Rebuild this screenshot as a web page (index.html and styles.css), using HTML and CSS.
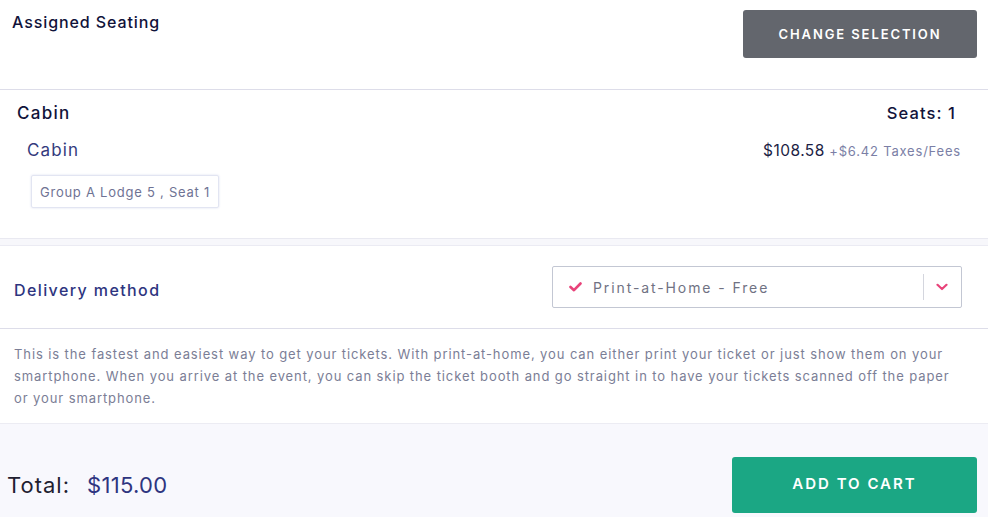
FILE: index.html
```html
<!DOCTYPE html>
<html>
<head>
<meta charset="utf-8">
<link rel="stylesheet" href="styles.css">
</head>
<body>
<div class="page">
  <section class="head">
    <h1 class="title">Assigned Seating</h1>
    <button class="btn-change">CHANGE SELECTION</button>
  </section>
  <section class="seats">
    <div class="row">
      <div class="cat">Cabin</div>
      <div class="count">Seats: 1</div>
    </div>
    <div class="row sub">
      <div class="subname">Cabin</div>
      <div class="price"><span class="amt">$108.58</span> <span class="fees">+$6.42 Taxes/Fees</span></div>
    </div>
    <div class="seat-tag">Group A Lodge 5 , Seat 1</div>
  </section>
  <div class="gap"></div>
  <section class="delivery">
    <div class="dlabel">Delivery method</div>
    <div class="select">
      <svg class="check" width="13" height="10" viewBox="0 0 13 10"><path d="M1.5 5 L5 8.2 L11.5 1.5" fill="none" stroke="#e8437a" stroke-width="2.6" stroke-linecap="round" stroke-linejoin="round"/></svg>
      <span class="sel-text">Print-at-Home - Free</span>
      <span class="divider"></span>
      <svg class="chev" width="12" height="8" viewBox="0 0 12 8"><path d="M1.5 1.8 L6 6 L10.5 1.8" fill="none" stroke="#e8437a" stroke-width="2.2" stroke-linecap="round" stroke-linejoin="round"/></svg>
    </div>
  </section>
  <section class="desc">
    <p>This is the fastest and easiest way to get your tickets. With print-at-home, you can either print your ticket or just show them on your smartphone. When you arrive at the event, you can skip the ticket booth and go straight in to have your tickets scanned off the paper or your smartphone.</p>
  </section>
  <section class="footer">
    <div class="total"><span class="tlabel">Total:</span><span class="tval">$115.00</span></div>
    <button class="btn-cart">ADD TO CART</button>
  </section>
</div>
</body>
</html>
```

FILE: styles.css
```css
* { box-sizing: border-box; }
html, body { margin: 0; padding: 0; background: #fff; }
body { font-family: "Inter", "Open Sans", sans-serif; width: 988px; height: 517px; overflow: hidden; }
.page { display: flex; flex-direction: column; height: 517px; }

.head { display: flex; justify-content: space-between; align-items: flex-start; height: 90px; border-bottom: 1px solid #dddde9; padding: 10px 11px 0 12px; }
.title { margin: 2px 0 0 0; font-size: 16px; font-weight: 500; color: #11133a; letter-spacing: 0.9px; }
.btn-change { width: 234px; height: 48px; border: none; border-radius: 3px; background: #63666d; color: #fff; font-family: inherit; font-size: 13px; font-weight: 600; letter-spacing: 1.9px; padding: 0; }

.seats { height: 149px; border-bottom: 1px solid #e9e9f1; padding: 13px 32px 0 17px; }
.row { display: flex; justify-content: space-between; align-items: baseline; }
.cat { font-size: 17px; font-weight: 500; color: #11133a; letter-spacing: 1.3px; }
.count { font-size: 16.5px; font-weight: 500; color: #11133a; letter-spacing: 1.1px; }
.row.sub { margin-top: 17px; margin-left: 10px; margin-right: -5px; }
.subname { font-size: 17px; color: #343b7d; letter-spacing: 1.1px; }
.amt { font-size: 15.5px; color: #1c1e45; letter-spacing: 0.45px; }
.fees { font-size: 13px; color: #7b7fa6; letter-spacing: 0.8px; }
.seat-tag { display: inline-block; margin: 15px 0 0 14px; border: 1px solid #e2e5f2; box-shadow: 0 0 2px rgba(120,130,200,0.3); border-radius: 2px; padding: 8px 8px 7px; font-size: 13px; color: #6f7394; letter-spacing: 0.75px; }

.gap { height: 7px; background: #f7f7fb; border-bottom: 1px solid #ebebf3; }

.delivery { height: 83px; border-bottom: 1px solid #dddde9; display: flex; justify-content: space-between; align-items: center; padding: 0 26px 0 14px; }
.dlabel { font-size: 16px; font-weight: 500; color: #2e3580; letter-spacing: 1.4px; margin-top: 6px; }
.select { width: 410px; height: 42px; border: 1px solid #c3c7d3; border-radius: 2px; display: flex; align-items: center; padding: 0 13px 0 16px; }
.check { flex: none; }
.sel-text { margin-left: 11px; font-size: 14px; color: #707283; letter-spacing: 1.9px; flex: 1; }
.divider { width: 1px; height: 26px; background: #d4d6de; margin-right: 12px; }
.chev { flex: none; }

.desc { height: 95px; border-bottom: 1px solid #ececf3; padding: 14px 30px 0 14px; }
.desc p { margin: 0; font-size: 13px; line-height: 22px; color: #7b7e96; letter-spacing: 0.9px; }

.footer { flex: 1; background: #f8f8fd; display: flex; justify-content: space-between; align-items: flex-start; padding: 33px 11px 0 7px; }
.total { margin-top: 15px; display: flex; align-items: baseline; }
.tlabel { font-size: 22px; color: #1f2030; letter-spacing: 1px; }
.tval { font-size: 22px; color: #2e3580; margin-left: 17px; letter-spacing: 0.3px; }
.btn-cart { width: 245px; height: 56px; border: none; border-radius: 3px; background: #1ba784; color: #fff; font-family: inherit; font-size: 15px; font-weight: 600; letter-spacing: 2px; padding: 0 0 3px; }
```
